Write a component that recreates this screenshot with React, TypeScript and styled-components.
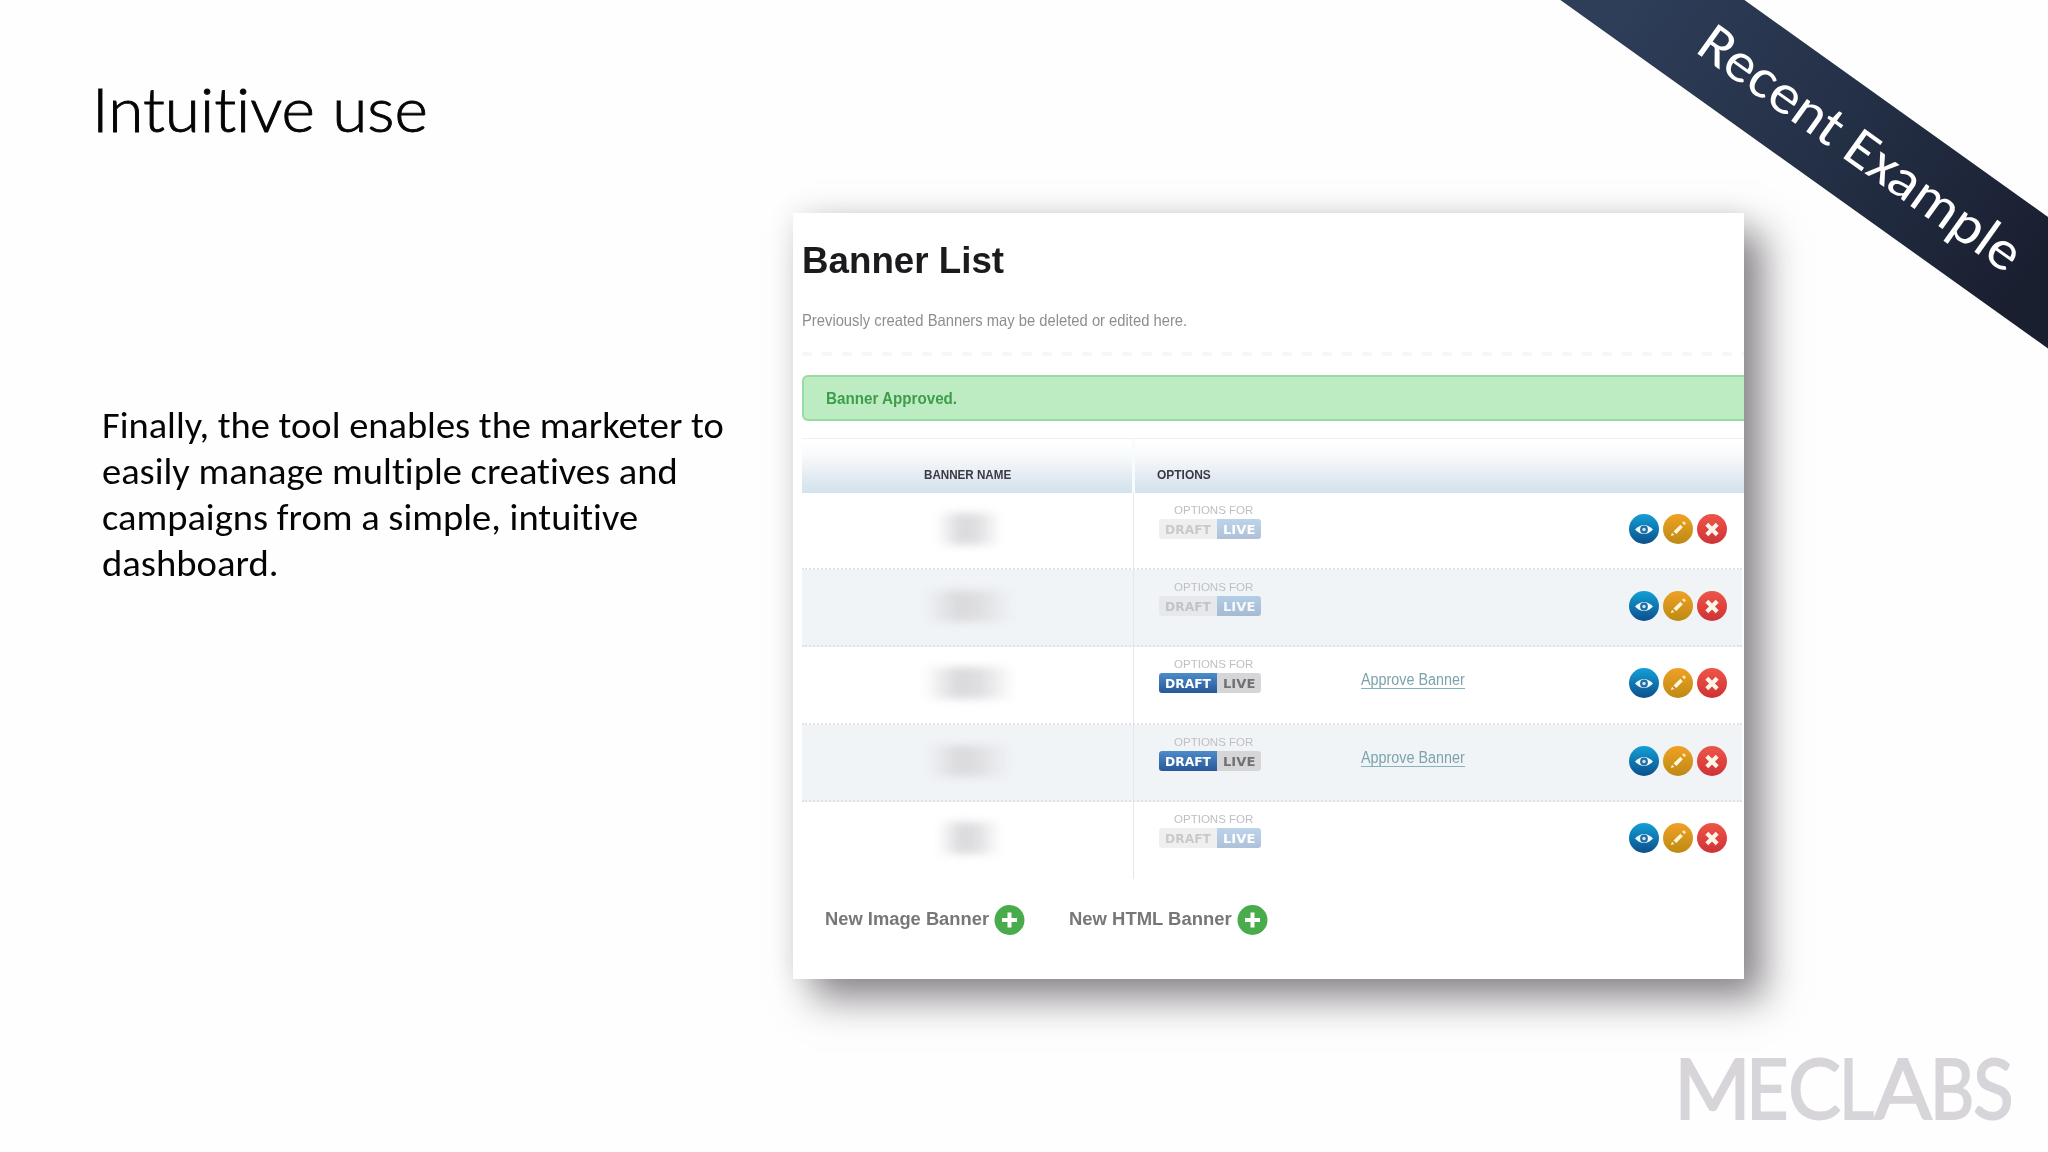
import React, { useLayoutEffect, useRef, useState } from "react";
import styled, { createGlobalStyle } from "styled-components";

const Global = createGlobalStyle`
  body { margin: 0; background: #fefefe; }
  * { box-sizing: border-box; }
`;

const Slide = styled.main`
  position: relative;
  width: 2048px;
  height: 1152px;
  overflow: hidden;
  background: #fefefe;
  display: grid;
  grid-template-columns: 793px 951px;
  grid-template-rows: 1044px 108px;
  font-family: "Liberation Sans", Arial, sans-serif;
`;

const FitBox = styled.span<{ $w: number; $ml: number }>`
  display: inline-block;
  flex: none;
  width: ${(p) => p.$w}px;
  margin-left: ${(p) => p.$ml}px;
  white-space: nowrap;
`;
const FitInner = styled.span`
  display: inline-block;
  transform-origin: 0 50%;
`;

/* Condenses or widens a line of text so that it fills the given width. */
function Fit({ w, ml = 0, children }: { w: number; ml?: number; children: string }) {
  const ref = useRef<HTMLSpanElement>(null);
  const [scale, setScale] = useState(1);
  useLayoutEffect(() => {
    if (ref.current) setScale(w / ref.current.offsetWidth);
  }, [w, children]);
  return (
    <FitBox $w={w} $ml={ml}>
      <FitInner ref={ref} style={{ transform: `scaleX(${scale})` }}>
        {children}
      </FitInner>
    </FitBox>
  );
}

const Copy = styled.section`
  padding: 72px 0 0 92px;
  font-family: Carlito, Lato, sans-serif;
  font-variant-ligatures: none;
  color: #050505;
`;
const Title = styled.h1`
  margin: 0;
  font-family: Lato, sans-serif;
  font-size: 60.5px;
  line-height: 73px;
  font-weight: 300;
  -webkit-text-stroke: 0.9px #050505;
`;
const Text = styled.p`
  margin: 257px 0 0 10px;
  font-size: 37.6px;
  line-height: 46px;
  display: flex;
  flex-direction: column;
`;

const Card = styled.section`
  margin-top: 213px;
  height: 766px;
  padding: 27px 0 0 9px;
  background: #fff;
  box-shadow: 20px 20px 36px rgba(30, 22, 30, 0.5), 0 -2px 26px rgba(0, 0, 0, 0.08);
`;
const CardTitle = styled.h2`
  margin: 0 0 30px;
  font-size: 36px;
  line-height: 41px;
  font-weight: 700;
  color: #1b1b1d;
`;
const Subtitle = styled.p`
  margin: 0;
  font-size: 16.5px;
  line-height: 19px;
  color: #8e8e90;
`;
const Divider = styled.div`
  margin: 22px 0 19px;
  height: 4px;
  background: repeating-linear-gradient(90deg, #f7f7fa 0 10px, #fff 10px 20px);
`;
const Alert = styled.div`
  height: 46px;
  padding-left: 22px;
  border: 2px solid #98dba4;
  border-right: 0;
  border-radius: 6px 0 0 6px;
  background: #bdecc2;
  color: #3d9d4b;
  font-size: 16px;
  font-weight: 700;
  line-height: 44px;
`;

const Table = styled.div`
  margin-top: 17px;
  width: 940px;
`;
const HeadRow = styled.div`
  display: grid;
  grid-template-columns: 333px 1fr;
  height: 55px;
  border-top: 1px solid #eef0f2;
  width: 942px;
`;
const HeadCell = styled.div<{ $pad: number; $line?: boolean }>`
  padding: 26px 0 0 ${(p) => p.$pad}px;
  border-right: ${(p) => (p.$line ? "3px solid #f6fbfe" : "0")};
  background: linear-gradient(#ffffff 5%, #f6f9fb 35%, #e4ebf2 68%, #d2e2ed);
  font-size: 13.5px;
  line-height: 20px;
  font-weight: 700;
  color: #3a3a42;
`;
const Row = styled.div<{ $alt: boolean; $last: boolean }>`
  display: grid;
  grid-template-columns: 332px 202px 1fr 113px;
  height: 77.2px;
  background: ${(p) => (p.$alt ? "#f1f4f7" : "#ffffff")};
  border-bottom: ${(p) => (p.$last ? "0" : "2px dotted #dfe2e6")};
`;
const NameCell = styled.div`
  padding: 20px 0 0 2px;
  border-right: 1.5px solid #e3e7ee;
  display: flex;
  justify-content: center;
`;
const Redacted = styled.div<{ $w: number }>`
  width: ${(p) => p.$w}px;
  height: 32px;
  background: linear-gradient(90deg, #d9d9db00, #dadadd 38%, #dfdfe2 62%, #d9d9dc00);
  filter: blur(4px);
`;
const OptionsCell = styled.div`
  padding: 9px 0 0 25px;
`;
const OptionsLabel = styled.div`
  padding-left: 15px;
  font-size: 10.5px;
  line-height: 17px;
  color: #bfbfc3;
`;
const Toggle = styled.div<{ $muted: boolean }>`
  display: flex;
  width: 102px;
  height: 20px;
  border-radius: 3px;
  overflow: hidden;
  opacity: ${(p) => (p.$muted ? 0.37 : 1)};
`;
const Segment = styled.div<{ $w: number; $on: boolean }>`
  width: ${(p) => p.$w}px;
  display: flex;
  justify-content: center;
  background: ${(p) => (p.$on ? "linear-gradient(#4d8cc8, #28589a)" : "#d6d6d8")};
  color: ${(p) => (p.$on ? "#ffffff" : "#707075")};
  font-family: "DejaVu Sans", sans-serif;
  font-size: 11.5px;
  font-weight: 700;
  line-height: 22px;
`;
const LinkCell = styled.div`
  padding: 23px 0 0 25px;
`;
const ApproveLink = styled.a`
  display: inline-block;
  height: 19px;
  font-size: 16px;
  line-height: 20px;
  color: #7ba3ad;
  border-bottom: 1px solid #86b3bb;
`;
const Actions = styled.div`
  display: flex;
  gap: 4px;
  padding-top: 21px;
  svg { display: block; }
`;
const Footer = styled.div`
  display: flex;
  align-items: center;
  margin-top: 26px;
  padding-left: 23px;
  font-size: 18px;
  font-weight: 700;
  line-height: 26px;
  color: #77777a;
  svg { display: block; }
`;
const NewItem = styled.div<{ $gap: number }>`
  display: flex;
  align-items: center;
  gap: 5px;
  margin-right: ${(p) => p.$gap}px;
  & > span { margin-bottom: 2px; }
`;

const Ribbon = styled.div`
  position: absolute;
  left: 1449px;
  top: 87px;
  width: 800px;
  height: 107px;
  transform: rotate(35.55deg);
  background: linear-gradient(90deg, #2e3d58 18%, #232f45 50%, #1a1f30 78%);
  display: flex;
  align-items: center;
  padding: 0 0 4px 222px;
  color: #fff;
  font-family: Carlito, Lato, sans-serif;
  font-size: 56.5px;
  line-height: 60px;
`;
const Logo = styled.div`
  grid-column: 1 / -1;
  padding-left: 1674px;
  width: 2048px;
  font-family: Lato, sans-serif;
  font-size: 84px;
  font-weight: 400;
  line-height: 86px;
  white-space: nowrap;
  color: #d7d5d9;
  -webkit-text-stroke: 1.8px #d7d5d9;
`;

function EyeIcon() {
  return (
    <svg width="30" height="30" viewBox="0 0 30 30">
      <defs>
        <linearGradient id="blue" x1="0" y1="0" x2="0" y2="1">
          <stop offset="0" stopColor="#12a0d6" />
          <stop offset="1" stopColor="#0c4f8c" />
        </linearGradient>
      </defs>
      <circle cx="15" cy="15" r="15" fill="url(#blue)" />
      <path d="M6 15.5Q15 6.500 24 15.500Q15 24.500 6 15.500Z" fill="#f1fbff" />
      <circle cx="15" cy="15.500" r="3.900" fill="#1d6ea6" />
      <circle cx="15" cy="15.500" r="1.700" fill="#cfe6f2" />
    </svg>
  );
}
function PencilIcon() {
  return (
    <svg width="30" height="30" viewBox="0 0 30 30">
      <defs>
        <linearGradient id="amber" x1="0" y1="0" x2="0" y2="1">
          <stop offset="0" stopColor="#f0a125" />
          <stop offset="1" stopColor="#bd8a14" />
        </linearGradient>
      </defs>
      <circle cx="15" cy="15" r="15" fill="url(#amber)" />
      <path d="M17.300 10.800L19.800 13.300L13.300 20L10.500 17.500Z" fill="#fff8dd" />
      <path d="M19 8.800L20.900 7.200L23 9.200L21.300 11.200Z" fill="#ffe9ae" />
      <path d="M9 18.800L11.300 21L7.800 22Z" fill="#fff4cf" />
    </svg>
  );
}
function DeleteIcon() {
  return (
    <svg width="30" height="30" viewBox="0 0 30 30">
      <defs>
        <linearGradient id="red" x1="0" y1="0" x2="0" y2="1">
          <stop offset="0" stopColor="#ee5648" />
          <stop offset="1" stopColor="#cf3236" />
        </linearGradient>
      </defs>
      <circle cx="15" cy="15" r="15" fill="url(#red)" />
      <path d="M9.800 10.300L20.200 20.700M20.200 10.300L9.800 20.700" stroke="#fff4ea" strokeWidth="4.200" />
    </svg>
  );
}
function AddIcon() {
  return (
    <svg width="31" height="30" viewBox="0 0 30 30">
      <circle cx="15" cy="15" r="15" fill="#48ab4c" />
      <path d="M15 7.500V22.500M7.500 15H22.500" stroke="#fff" strokeWidth="4" />
    </svg>
  );
}

const rows = [
  { draft: false, blob: 66 },
  { draft: false, blob: 92 },
  { draft: true, blob: 92 },
  { draft: true, blob: 86 },
  { draft: false, blob: 64 },
];

/* Wordmark letters: each has its own width and kerning. */
const wordmark = [
  { ch: "M", w: 77, kern: 0 },
  { ch: "E", w: 43, kern: -5 },
  { ch: "C", w: 53, kern: -1 },
  { ch: "L", w: 35, kern: -2 },
  { ch: "A", w: 58, kern: 0 },
  { ch: "B", w: 44, kern: -2 },
  { ch: "S", w: 41, kern: -1 },
];

export default function App() {
  return (
    <>
      <Global />
      <Slide>
        <Copy>
          <Title><Fit w={336}>Intuitive use</Fit></Title>
          <Text>
            <Fit w={622}>Finally, the tool enables the marketer to</Fit>
            <Fit w={576}>easily manage multiple creatives and</Fit>
            <Fit w={536}>campaigns from a simple, intuitive</Fit>
            <Fit w={177}>dashboard.</Fit>
          </Text>
        </Copy>
        <Card>
          <CardTitle><Fit w={202}>Banner List</Fit></CardTitle>
          <Subtitle><Fit w={385}>Previously created Banners may be deleted or edited here.</Fit></Subtitle>
          <Divider />
          <Alert><Fit w={131}>Banner Approved.</Fit></Alert>
          <Table>
            <HeadRow>
              <HeadCell $pad={122} $line><Fit w={87}>BANNER NAME</Fit></HeadCell>
              <HeadCell $pad={22}><Fit w={54}>OPTIONS</Fit></HeadCell>
            </HeadRow>
            {rows.map((r, i) => (
              <Row key={i} $alt={i % 2 === 1} $last={i === rows.length - 1}>
                <NameCell><Redacted $w={r.blob} /></NameCell>
                <OptionsCell>
                  <OptionsLabel><Fit w={79}>OPTIONS FOR</Fit></OptionsLabel>
                  <Toggle $muted={!r.draft}>
                    <Segment $w={58} $on={r.draft}><Fit w={46}>DRAFT</Fit></Segment>
                    <Segment $w={44} $on={!r.draft}><Fit w={32}>LIVE</Fit></Segment>
                  </Toggle>
                </OptionsCell>
                <LinkCell>
                  {r.draft && <ApproveLink><Fit w={104}>Approve Banner</Fit></ApproveLink>}
                </LinkCell>
                <Actions>
                  <EyeIcon />
                  <PencilIcon />
                  <DeleteIcon />
                </Actions>
              </Row>
            ))}
          </Table>
          <Footer>
            <NewItem $gap={44}><Fit w={164}>New Image Banner</Fit><AddIcon /></NewItem>
            <NewItem $gap={0}><Fit w={163}>New HTML Banner</Fit><AddIcon /></NewItem>
          </Footer>
        </Card>
        <Logo>
          {wordmark.map((l, i) => (
            <Fit key={i} w={l.w} ml={l.kern}>{l.ch}</Fit>
          ))}
        </Logo>
        <Ribbon><Fit w={384}>Recent Example</Fit></Ribbon>
      </Slide>
    </>
  );
}
